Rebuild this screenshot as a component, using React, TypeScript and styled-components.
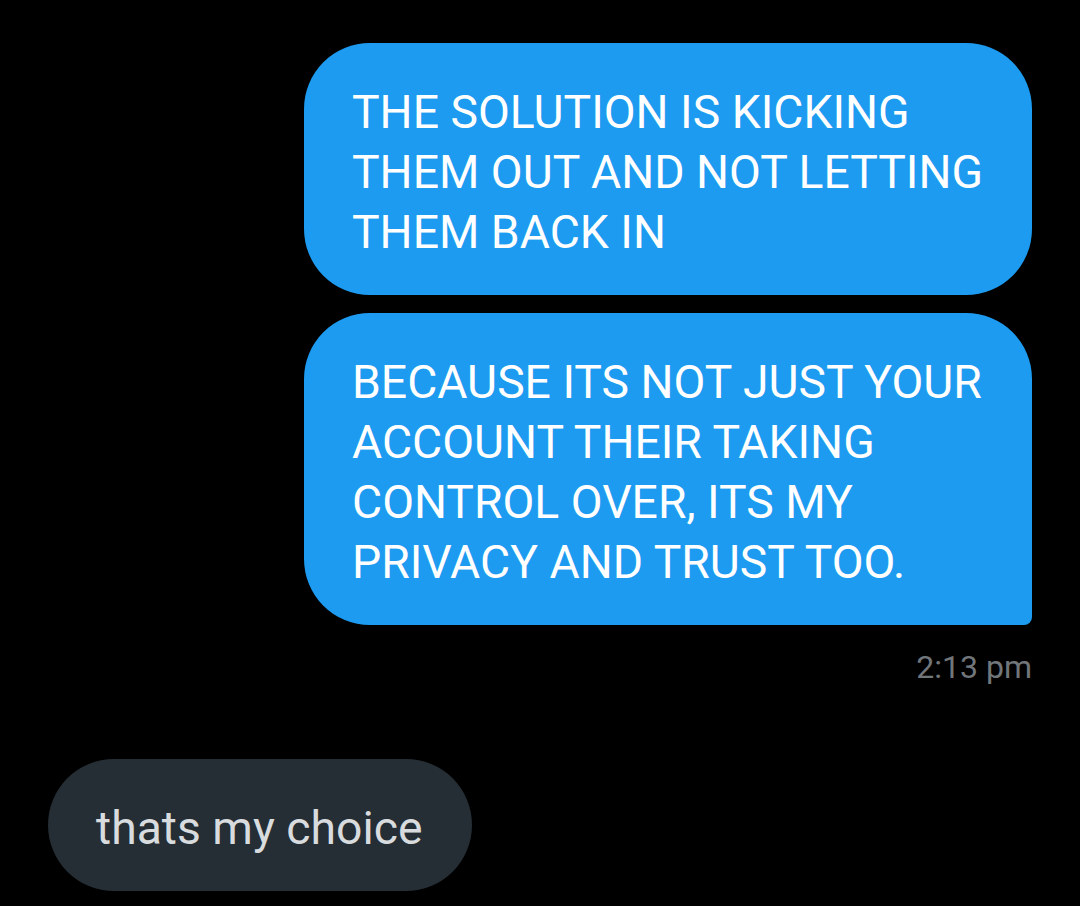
import React from "react";
import styled, { createGlobalStyle } from "styled-components";

const Global = createGlobalStyle`
  html, body {
    margin: 0;
    padding: 0;
    background: #000000;
  }
  body {
    font-family: Roboto, "Noto Sans", "Liberation Sans", sans-serif;
    -webkit-font-smoothing: antialiased;
  }
`;

const Screen = styled.div`
  width: 1080px;
  height: 906px;
  background: #000000;
  box-sizing: border-box;
  padding: 43px 48px 0 48px;
  display: flex;
  flex-direction: column;
  overflow: hidden;
`;

const SentGroup = styled.div`
  display: flex;
  flex-direction: column;
  align-items: flex-end;
  gap: 18px;
`;

const Bubble = styled.div<{ $variant: "sent" | "received"; $tail?: boolean }>`
  box-sizing: border-box;
  padding: 39px 49px 33px 48px;
  font-size: 46.3px;
  line-height: 60px;
  font-weight: 400;
  white-space: nowrap;
  color: ${(p) => (p.$variant === "sent" ? "#ffffff" : "#d9dcde")};
  background: ${(p) => (p.$variant === "sent" ? "#1d9bf0" : "#252e35")};
  border-radius: ${(p) => (p.$tail ? "66px 66px 8px 66px" : "66px")};
  width: ${(p) => (p.$variant === "sent" ? "728px" : "auto")};
  align-self: ${(p) => (p.$variant === "sent" ? "flex-end" : "flex-start")};
`;

const Time = styled.div`
  align-self: flex-end;
  margin-top: 22px;
  font-size: 32px;
  line-height: 40px;
  color: #71767b;
`;

const ReceivedGroup = styled.div`
  display: flex;
  flex-direction: column;
  align-items: flex-start;
  margin-top: 72px;
`;

export default function App() {
  return (
    <>
      <Global />
      <Screen>
        <SentGroup>
          <Bubble $variant="sent">
            THE SOLUTION IS KICKING
            <br />
            THEM OUT AND NOT LETTING
            <br />
            THEM BACK IN
          </Bubble>
          <Bubble $variant="sent" $tail>
            BECAUSE ITS NOT JUST YOUR
            <br />
            ACCOUNT THEIR TAKING
            <br />
            CONTROL OVER, ITS MY
            <br />
            PRIVACY AND TRUST TOO.
          </Bubble>
        </SentGroup>
        <Time>2:13 pm</Time>
        <ReceivedGroup>
          <Bubble $variant="received">thats my choice</Bubble>
        </ReceivedGroup>
      </Screen>
    </>
  );
}
